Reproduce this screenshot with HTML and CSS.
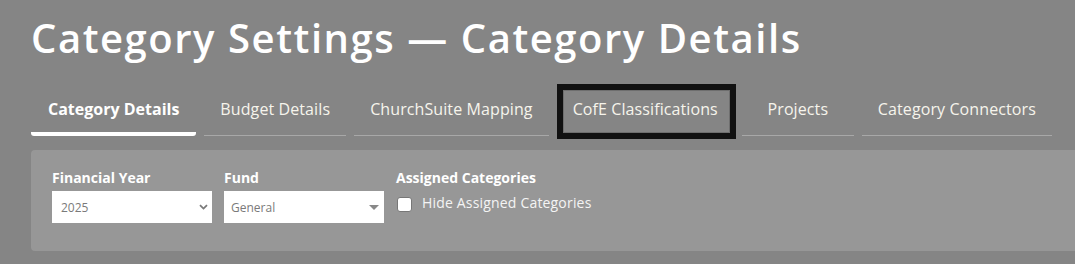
FILE: index.html
```html
<!DOCTYPE html>
<html lang="en">
<head>
<meta charset="utf-8">
<title>Category Settings — Category Details</title>
<link rel="stylesheet" href="styles.css">
</head>
<body>
<div class="page">
  <h1 class="title">Category Settings — Category Details</h1>
  <nav class="tabs">
    <a class="tab active">Category Details</a>
    <a class="tab">Budget Details</a>
    <a class="tab">ChurchSuite Mapping</a>
    <a class="tab focused">CofE Classifications</a>
    <a class="tab">Projects</a>
    <a class="tab">Category Connectors</a>
  </nav>
  <section class="panel">
    <div class="field">
      <label class="field-label">Financial Year</label>
      <div class="select">
        <span class="select-value">2025</span>
        <svg class="chevron" width="9" height="6" viewBox="0 0 9 6"><path d="M1 1.2 L4.5 4.6 L8 1.2" fill="none" stroke="#7a7a7a" stroke-width="1.8"/></svg>
      </div>
    </div>
    <div class="field">
      <label class="field-label">Fund</label>
      <div class="select select2">
        <span class="select-value">General</span>
        <svg class="caret" width="10" height="5" viewBox="0 0 10 5"><path d="M0 0 H10 L5 5 Z" fill="#888"/></svg>
      </div>
    </div>
    <div class="field wide">
      <label class="field-label">Assigned Categories</label>
      <div class="check-row">
        <input type="checkbox" class="check">
        <span class="check-label">Hide Assigned Categories</span>
      </div>
    </div>
  </section>
</div>
</body>
</html>
```
FILE: styles.css
```css
html, body {
  margin: 0;
  padding: 0;
  background: #858585;
  font-family: "Open Sans", "Liberation Sans", sans-serif;
  overflow: hidden;
}

.page {
  padding: 14px 0 0 31px;
}

.title {
  margin: 0;
  font-size: 40px;
  line-height: 48px;
  font-weight: 600;
  letter-spacing: 1.55px;
  color: #ffffff;
  white-space: nowrap;
}

.tabs {
  display: flex;
  align-items: flex-end;
  margin-top: 25px;
}

.tab {
  position: relative;
  display: block;
  box-sizing: border-box;
  min-width: 112px;
  text-align: center;
  padding: 10px 16px 14px;
  margin-right: 8px;
  font-size: 16px;
  line-height: 24px;
  letter-spacing: 0.1px;
  color: #f6f4ec;
  border-bottom: 1px solid #a8a8a8;
  white-space: nowrap;
}

.tab.active {
  font-weight: 700;
  letter-spacing: 0;
  color: #ffffff;
  padding-left: 17px;
  padding-right: 17px;
  padding-bottom: 11px;
  border-bottom: 4px solid #ffffff;
  border-radius: 0 0 3px 3px;
}

.tab.focused {
  border-bottom-color: transparent;
  margin-right: 6px;
  padding-right: 18px;
}

.tab.focused::before {
  content: "";
  position: absolute;
  left: 0;
  right: 0;
  top: -3px;
  bottom: -4px;
  border: 6px solid #111111;
  box-shadow: inset 0 0 0 1px #6e6e6e;
}

.panel {
  display: flex;
  gap: 12px;
  margin-top: 14px;
  padding: 17px 20px 28px 21px;
  background: #979797;
  border-radius: 4px 0 0 4px;
}

.field {
  width: 160px;
  display: flex;
  flex-direction: column;
}

.field.wide {
  width: 260px;
}

.field-label {
  display: block;
  font-size: 14px;
  line-height: 21px;
  font-weight: 700;
  color: #ffffff;
  margin-bottom: 3px;
  white-space: nowrap;
}

.select {
  height: 32px;
  background: #ffffff;
  display: flex;
  align-items: center;
  padding-left: 9px;
  box-sizing: border-box;
}

.select.select2 {
  padding-left: 7px;
}

.select-value {
  flex: 1;
  font-size: 12px;
  color: #7a7a7a;
}

.chevron {
  margin-right: 4px;
}

.caret {
  margin-right: 5px;
}

.check-row {
  display: flex;
  align-items: flex-start;
  height: 21px;
  margin-top: 1px;
}

.check {
  appearance: none;
  -webkit-appearance: none;
  width: 15px;
  height: 15px;
  margin: 5px 10px 0 1px;
  background: #ffffff;
  border: 1px solid #777777;
  border-radius: 3px;
  box-sizing: border-box;
}

.check-label {
  font-size: 14px;
  line-height: 21px;
  letter-spacing: 0.18px;
  color: #f4f4f4;
  white-space: nowrap;
}
```
